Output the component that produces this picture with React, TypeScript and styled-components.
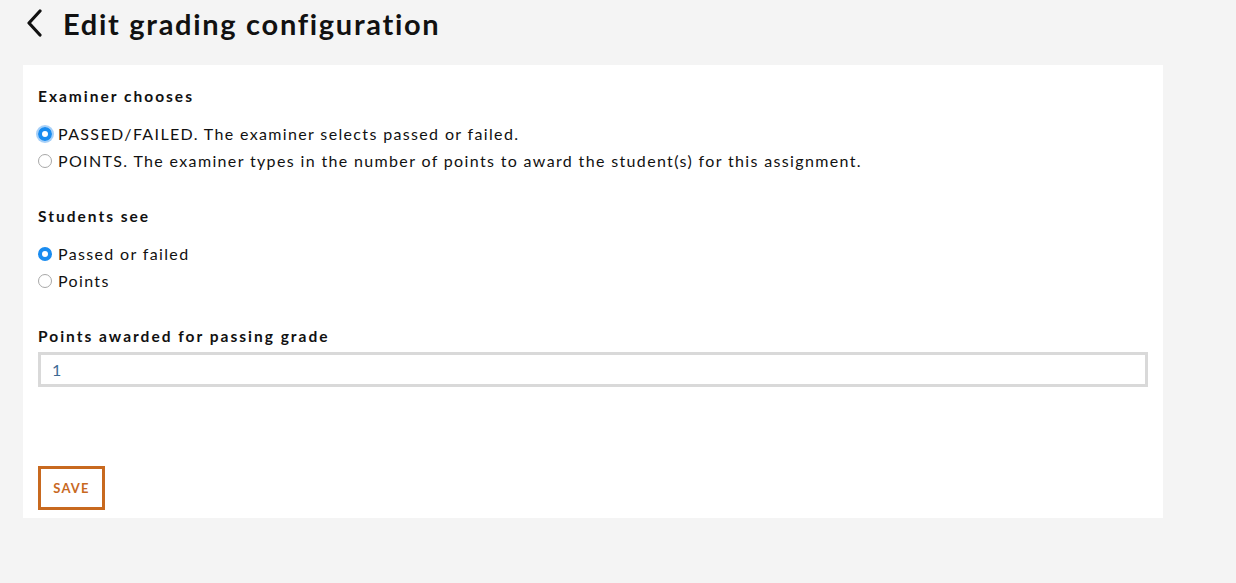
import React from "react";
import styled, { createGlobalStyle } from "styled-components";

const Global = createGlobalStyle`
  html, body { margin: 0; padding: 0; background: #f4f4f4; }
  body { font-family: "Lato", "Open Sans", sans-serif; color: #111; }
`;

const Page = styled.div`
  padding: 0 0 0 23px;
  width: 1140px;
`;

const Header = styled.div`
  display: flex;
  align-items: center;
  height: 46px;
  gap: 20px;
  padding-left: 2px;
`;

const BackButton = styled.button`
  border: 0;
  background: none;
  padding: 0;
  display: flex;
  align-items: center;
  cursor: pointer;
`;

const Title = styled.h1`
  margin: 0;
  font-size: 29px;
  font-weight: 700;
  letter-spacing: 1.7px;
  color: #111;
`;

const Card = styled.div`
  background: #fff;
  margin-top: 19px;
  padding: 20px 15px 8px 15px;
  display: flex;
  flex-direction: column;
`;

const Section = styled.div<{ $mb: number }>`
  display: flex;
  flex-direction: column;
  margin-bottom: ${(p) => p.$mb}px;
`;

const Label = styled.div<{ $mb?: number }>`
  font-size: 15.5px;
  font-weight: 700;
  letter-spacing: 2px;
  line-height: 22px;
  margin-bottom: ${(p) => (p.$mb ?? 13)}px;
`;

const RadioRow = styled.label`
  display: flex;
  align-items: center;
  height: 27px;
  font-size: 16px;
  letter-spacing: 1.35px;
  color: #111;
  cursor: pointer;
`;

const RadioDot = styled.span<{ $checked: boolean }>`
  width: 14px;
  height: 14px;
  box-sizing: border-box;
  border-radius: 50%;
  margin-right: 6px;
  flex: none;
  position: relative;
  ${(p) =>
    p.$checked
      ? `background: #1a8cf0; border: 4px solid #1a8cf0;
         &::after { content: ""; position: absolute; left: 0; top: 0; width: 6px; height: 6px; border-radius: 50%; background: #fff; }`
      : `background: #fff; border: 1px solid #a8a8a8;`}
`;

const Focused = styled.span`
  display: inline-flex;
  border-radius: 50%;
  box-shadow: 0 0 0 2px rgba(60, 150, 240, 0.45);
  margin-right: 6px;
  & > span { margin-right: 0; }
`;

const Input = styled.input`
  box-sizing: border-box;
  width: 1110px;
  height: 35px;
  border: 3px solid #d9d9d9;
  padding: 0 11px;
  font-family: inherit;
  font-size: 16px;
  color: #3d6a93;
  outline: none;
`;

const SaveButton = styled.button`
  align-self: flex-start;
  box-sizing: border-box;
  width: 67px;
  height: 44px;
  border: 3px solid #c8691f;
  background: #fff;
  color: #c8691f;
  font-family: inherit;
  font-weight: 700;
  font-size: 13px;
  letter-spacing: 1.2px;
  margin-top: 79px;
`;

const Radio = ({ checked, focused, children }: { checked: boolean; focused?: boolean; children: React.ReactNode }) => (
  <RadioRow>
    {focused ? (
      <Focused>
        <RadioDot $checked={checked} />
      </Focused>
    ) : (
      <RadioDot $checked={checked} />
    )}
    {children}
  </RadioRow>
);

export default function App() {
  return (
    <>
      <Global />
      <Page>
        <Header>
          <BackButton aria-label="Back">
            <svg width="18" height="28" viewBox="0 0 18 28" fill="none">
              <path d="M15 2 L4 14 L15 26" stroke="#111" strokeWidth="3.2" strokeLinecap="round" strokeLinejoin="round" />
            </svg>
          </BackButton>
          <Title>Edit grading configuration</Title>
        </Header>
        <Card>
          <Section $mb={31}>
            <Label>Examiner chooses</Label>
            <Radio checked focused>PASSED/FAILED. The examiner selects passed or failed.</Radio>
            <Radio checked={false}>POINTS. The examiner types in the number of points to award the student(s) for this assignment.</Radio>
          </Section>
          <Section $mb={31}>
            <Label>Students see</Label>
            <Radio checked>Passed or failed</Radio>
            <Radio checked={false}>Points</Radio>
          </Section>
          <Section $mb={0}>
            <Label $mb={5}>Points awarded for passing grade</Label>
            <Input defaultValue="1" />
          </Section>
          <SaveButton>SAVE</SaveButton>
        </Card>
      </Page>
    </>
  );
}
